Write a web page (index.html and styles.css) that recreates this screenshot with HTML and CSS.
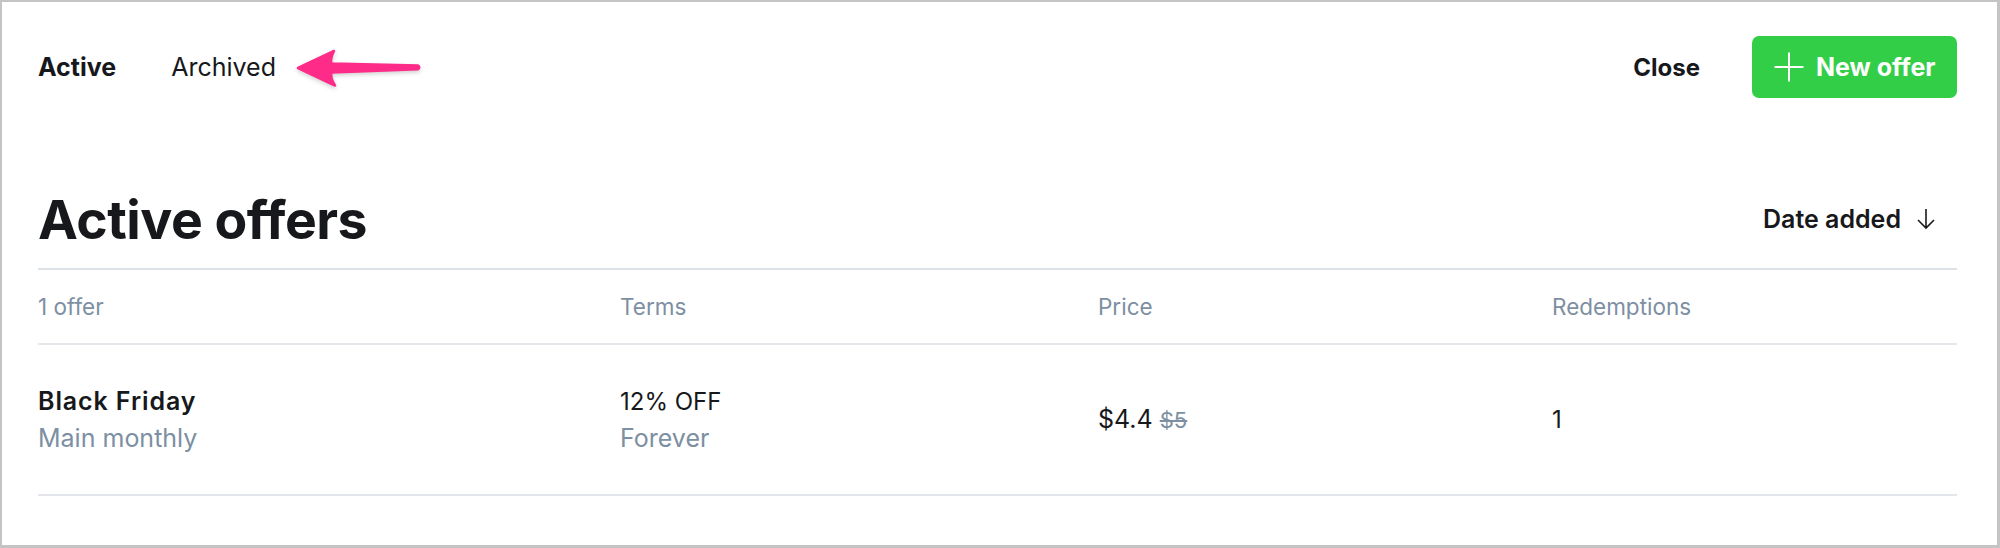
FILE: index.html
```html
<!DOCTYPE html>
<html>
<head>
<meta charset="utf-8">
<title>Offers</title>
<link rel="stylesheet" href="styles.css">
</head>
<body>

<div class="frame">

<div class="topbar">
  <div class="tabs">
    <span class="tab current">Active</span>
    <span class="tab">Archived</span>
    <svg class="pointer" width="130" height="42" viewBox="0 0 130 42">
      <path d="M4 21 L40 4 Q36 12 37.5 16.5 L124 18.5 Q126.5 20.2 124 22.2 L37.5 25.5 Q36 31 41 38.5 Z" fill="#fe2b88" stroke="#fe2b88" stroke-width="2.5" stroke-linejoin="round"/>
    </svg>
  </div>
  <div class="actions">
    <span class="close">Close</span>
    <button class="new-offer">
      <svg width="30" height="30" viewBox="0 0 30 30"><path d="M15 0.5 V29.5 M0.5 15 H29.5" stroke="#fff" stroke-width="2" fill="none"/></svg>
      New offer
    </button>
  </div>
</div>

<div class="heading">
  <h1>Active offers</h1>
  <span class="sort">Date added
    <svg width="22" height="22" viewBox="0 0 22 22"><path d="M11 1 V20 M3 12 L11 20 L19 12" stroke="#1a1b1f" stroke-width="1.6" fill="none"/></svg>
  </span>
</div>

<div class="row head">
  <div>1 offer</div>
  <div>Terms</div>
  <div>Price</div>
  <div>Redemptions</div>
</div>

<div class="row item">
  <div>
    <div class="name">Black Friday</div>
    <div class="muted">Main monthly</div>
  </div>
  <div>
    <div>12% OFF</div>
    <div class="muted">Forever</div>
  </div>
  <div class="price">$4.4 <s class="was">$5</s></div>
  <div>1</div>
</div>

</div>

</body>
</html>
```

FILE: styles.css
```css
html, body { margin: 0; background: #fff; }

body {
  font-family: "Inter", "Liberation Sans", sans-serif;
  color: #17181c;
}

.frame {
  box-sizing: border-box;
  height: 548px;
  border-style: solid;
  border-color: #c4c4c4;
  border-width: 2px 3px 3px 2px;
  padding: 34px 40px 0 36px;
}

.topbar {
  display: flex;
  align-items: center;
  justify-content: space-between;
  height: 62px;
}

.tabs { display: flex; align-items: center; }

.tab { font-size: 25px; margin-right: 55px; }
.tab:nth-child(2) { margin-right: 18px; }
.tab.current { font-weight: 700; }

.pointer {
  margin-top: 2px;
  filter: drop-shadow(0 2px 2px rgba(0,0,0,0.18));
}

.actions { display: flex; align-items: center; }

.close { font-size: 24px; font-weight: 700; margin-right: 52px; }

.new-offer {
  display: flex;
  align-items: center;
  gap: 12px;
  width: 205px;
  height: 62px;
  padding: 0 0 0 22px;
  border: none;
  border-radius: 7px;
  background: #33ce48;
  color: #fff;
  font-family: inherit;
  font-size: 25px;
  font-weight: 700;
}

.heading {
  display: flex;
  align-items: center;
  justify-content: space-between;
  height: 70px;
  margin-top: 86px;
  padding-bottom: 14px;
  border-bottom: 2px solid #dde2e8;
}

h1 {
  margin: 0;
  font-size: 53.5px;
  font-weight: 700;
  letter-spacing: -0.5px;
}

.sort {
  display: flex;
  align-items: center;
  gap: 14px;
  margin-right: 20px;
  font-size: 25px;
  font-weight: 600;
}

.row {
  display: grid;
  grid-template-columns: 582px 478px 454px 1fr;
  align-items: center;
  border-bottom: 2px solid #e3e7eb;
}

.row.head {
  height: 73px;
  font-size: 22.5px;
  color: #7d8fa2;
}

.row.item {
  height: 149px;
  font-size: 24px;
  line-height: 37px;
}

.name { font-size: 25px; font-weight: 600; letter-spacing: 0.9px; }

.muted { color: #7d8fa2; font-size: 25px; }

.price { font-size: 25px; }

.was {
  font-size: 22px;
  color: #7d8fa2;
}
```
